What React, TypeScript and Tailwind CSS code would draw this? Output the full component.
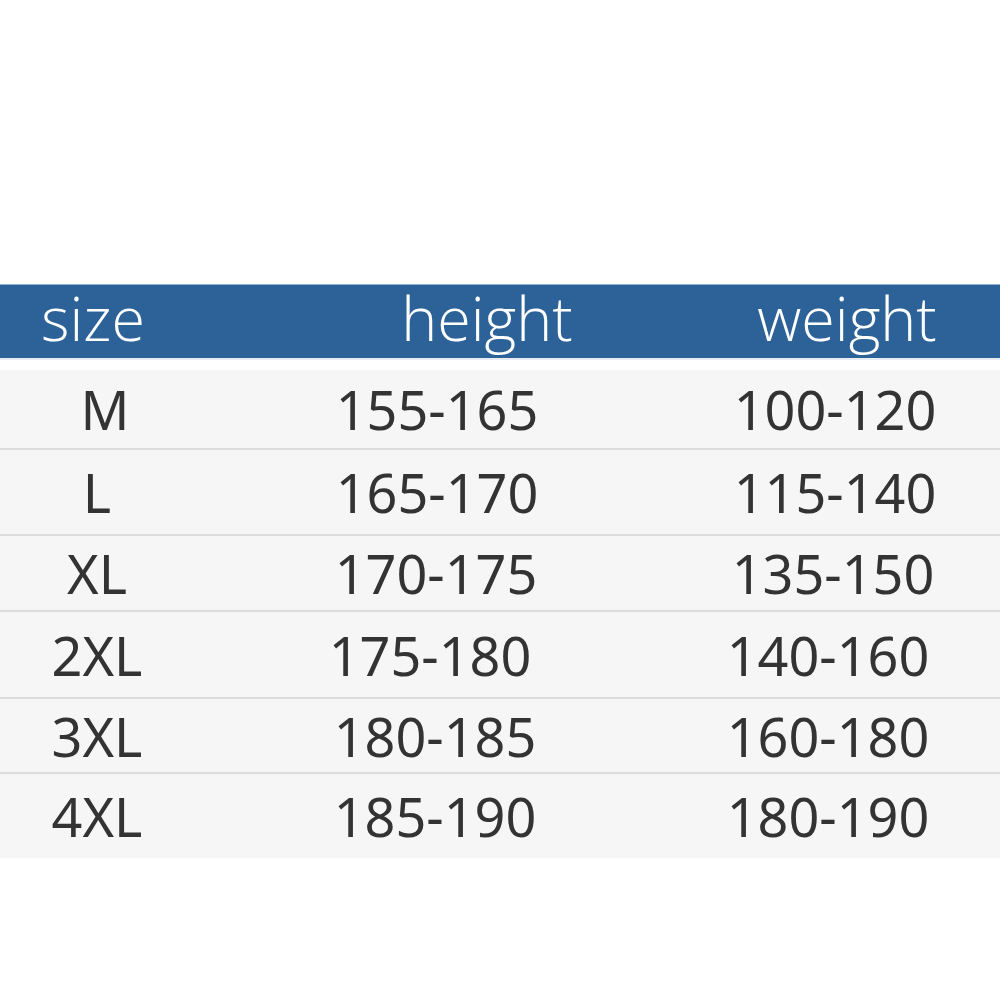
import React from 'react';

const rows = [
  { size: 'M', height: '155-165', weight: '100-120', h: 'h-[78px]', s: 'pl-[16px]', hh: 'pl-[4px]', w: 'pr-[6px]' },
  { size: 'L', height: '165-170', weight: '115-140', h: 'h-[86px]', s: 'pl-0', hh: 'pl-[4px]', w: 'pr-[6px]' },
  { size: 'XL', height: '170-175', weight: '135-150', h: 'h-[76px]', s: 'pl-0', hh: 'pl-[2px]', w: 'pr-[10px]' },
  { size: '2XL', height: '175-180', weight: '140-160', h: 'h-[87px]', s: 'pl-0', hh: 'pr-[10px]', w: 'pr-[20px]' },
  { size: '3XL', height: '180-185', weight: '160-180', h: 'h-[75px]', s: 'pl-0', hh: 'pl-0', w: 'pr-[20px]' },
  { size: '4XL', height: '185-190', weight: '180-190', h: 'h-[86px]', s: 'pl-0', hh: 'pl-0', w: 'pr-[20px]' },
];

const SizeTable: React.FC = () => {
  return (
    <div className="w-full">
      <div className="grid grid-cols-[194px_482px_324px] h-[74px] items-center bg-[#2d6299] border-t border-[#8fb0d3] text-white font-light text-[61px] leading-none font-['Open_Sans',sans-serif]">
        <div className="text-center pb-[8px] pr-[8px]">size</div>
        <div className="text-center pb-[8px] pl-[104px]">height</div>
        <div className="text-center pb-[8px] pl-[18px]">weight</div>
      </div>
      <div className="h-[12px] bg-white border-t-2 border-[#e6ecf2]" />
      <div className="bg-[#f6f6f6]">
        {rows.map((r, i) => (
          <div
            key={r.size}
            className={`grid grid-cols-[194px_482px_324px] items-center ${r.h} ${i > 0 ? 'border-t-2 border-[#dcdcdc]' : ''} text-[#333333] text-[54px] leading-none font-['Noto_Sans',sans-serif]`}
          >
            <div className={`text-center ${r.s}`}>{r.size}</div>
            <div className={`text-center ${r.hh}`}>{r.height}</div>
            <div className={`text-center ${r.w}`}>{r.weight}</div>
          </div>
        ))}
      </div>
    </div>
  );
};

export default function App() {
  return (
    <div className="w-[1000px] h-[1000px] bg-white pt-[284px]">
      <SizeTable />
    </div>
  );
}
